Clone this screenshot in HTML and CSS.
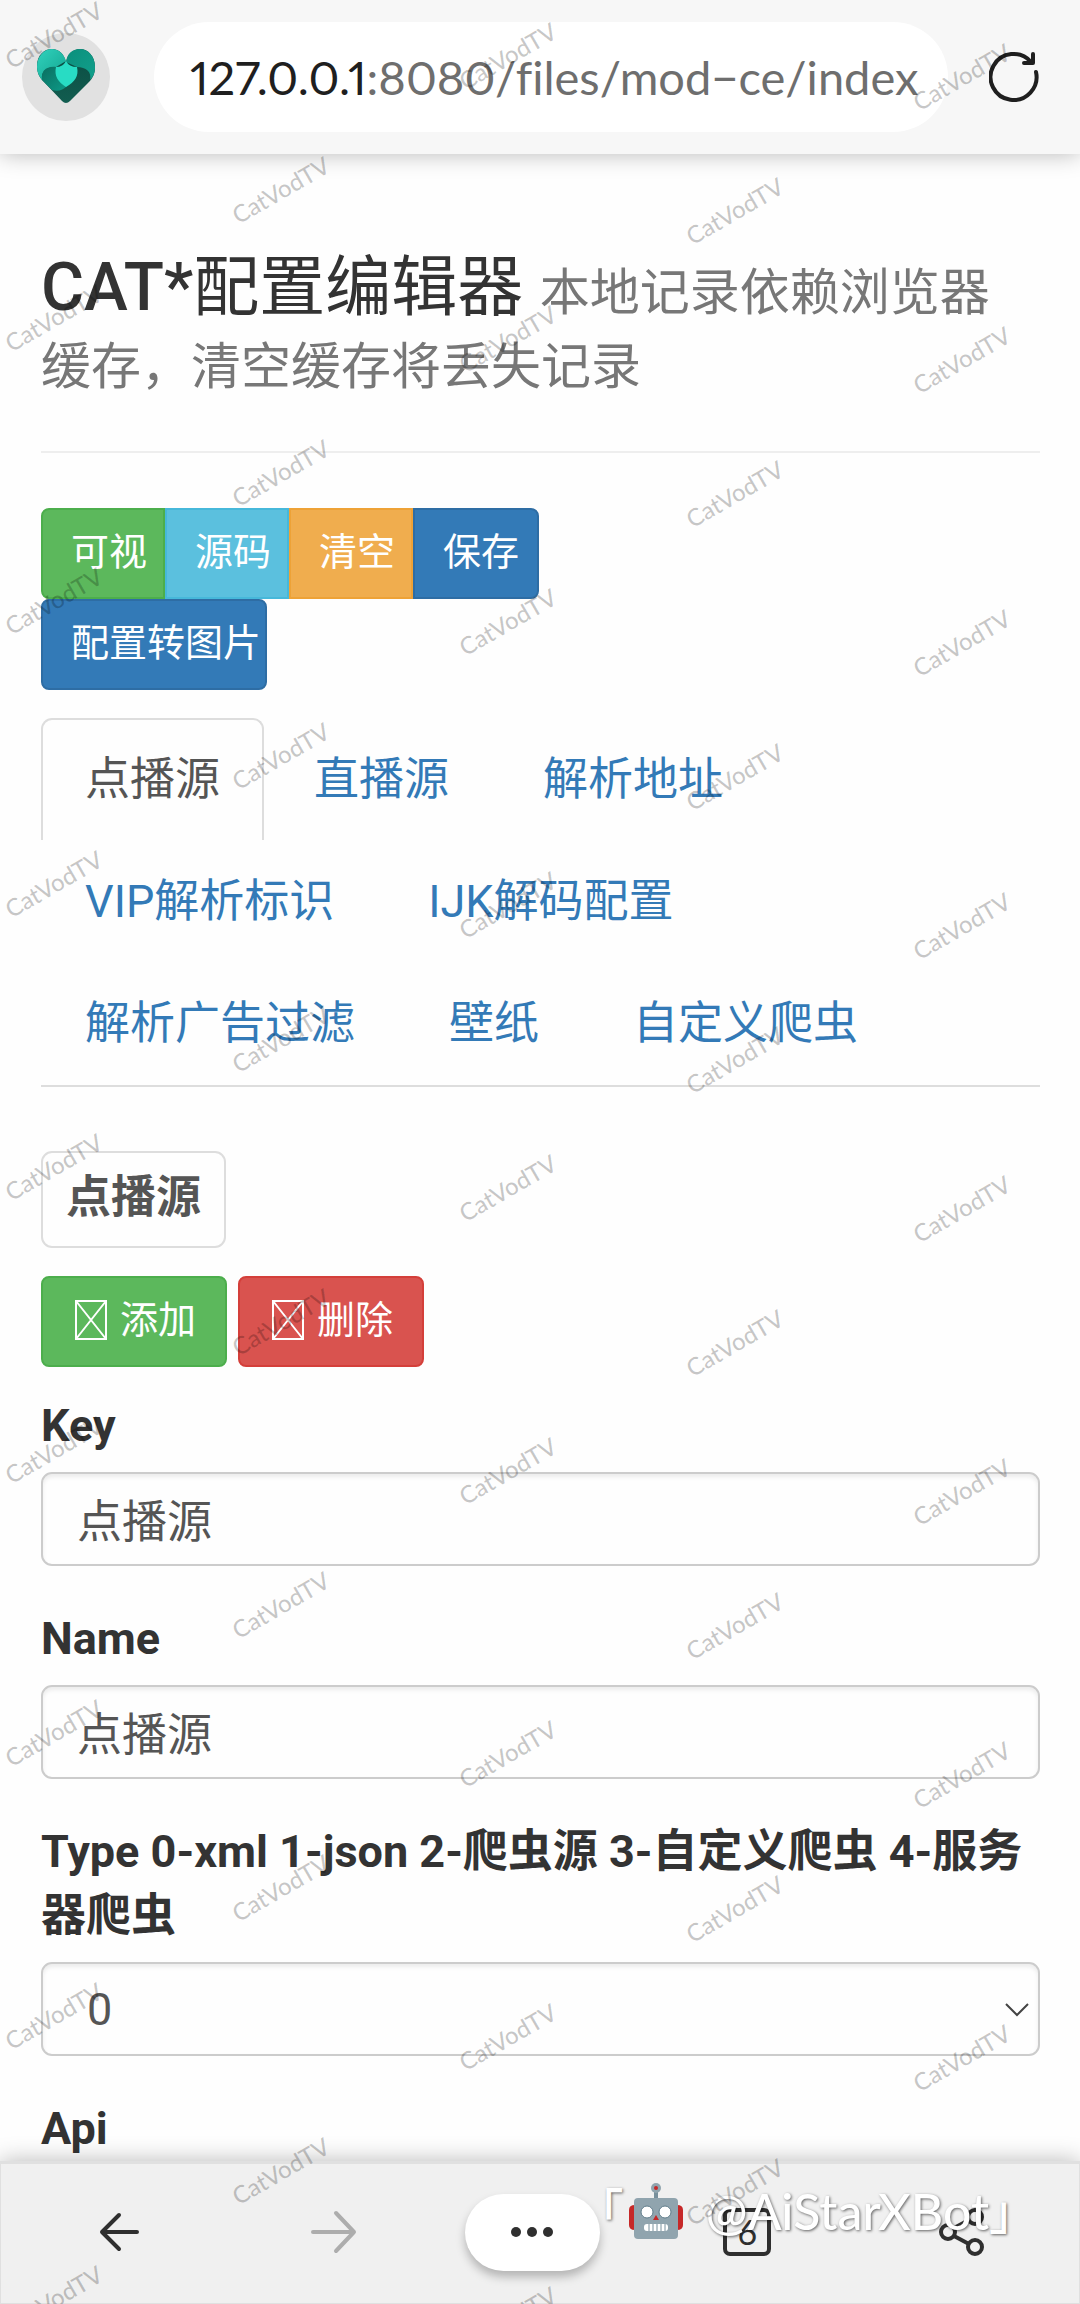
FILE: index.html
```html
<!DOCTYPE html>
<html lang="zh-CN">
<head>
<meta charset="utf-8">
<meta name="viewport" content="width=device-width, initial-scale=1">
<title>CAT*配置编辑器</title>
<link rel="stylesheet" href="styles.css">
</head>
<body>
<header class="topbar">
  <button class="avatar" type="button" aria-label="主页">
    <svg width="60" height="56" viewBox="0 0 60 56" aria-hidden="true">
      <defs>
        <linearGradient id="lobeLeft" x1="0" y1="0" x2="1" y2="1"><stop offset="0" stop-color="#31d2bd"/><stop offset="1" stop-color="#13a590"/></linearGradient>
        <linearGradient id="lobeRight" x1="0" y1="0" x2="1" y2="1"><stop offset="0" stop-color="#0b8f7c"/><stop offset="1" stop-color="#12a08c"/></linearGradient>
        <linearGradient id="foldLeft" x1="0" y1="0" x2="1" y2="1"><stop offset="0" stop-color="#0a6e60"/><stop offset="1" stop-color="#0d9b88"/></linearGradient>
        <linearGradient id="foldRight" x1="0" y1="0" x2="0" y2="1"><stop offset="0" stop-color="#0b4c42"/><stop offset="1" stop-color="#125d50"/></linearGradient>
      </defs>
      <path d="M30 13C28 5 23 0 16 0C8 0 1 6 1 17C1 25 4 29 8 33L26 52Q30 56 34 52L52 34C57 29 59 25 59 18C59 7 52 0 44 0C37 0 32 5 30 13Z" fill="url(#foldRight)"/>
      <path d="M30 12C28 5 23 0 16 0C8 0 1 7 1 18C1 23 3 27 6 31C5 22 10 18 20 18Z" fill="url(#lobeLeft)"/>
      <path d="M30 13C31 5 36 0 44 0C52 0 59 7 59 18C59 24 57 28 54 31C56 23 50 18 41 18Z" fill="url(#lobeRight)"/>
      <path d="M20 18C10 17 5 22 6 31L16 41C22 43 27 41 31 37Z" fill="url(#foldLeft)"/>
      <path d="M30 12Q27 18 20 18C18 27 22 33 30 38C39 33 43 27 41 18Q33 18 30 12Z" fill="#28dcc4"/>
    </svg>
  </button>
  <button class="address" type="button"><span class="host">127.0.0.1</span>:8080/files/mod−ce/index</button>
  <button class="reload" type="button" aria-label="刷新">
    <svg width="50" height="52" viewBox="0 0 50 52" fill="none" stroke="#1f1f1f" stroke-width="4" stroke-linecap="round" stroke-linejoin="round" aria-hidden="true">
      <path d="M47 21A23 23 0 1 1 42 11"/><path d="M44 3V12H35"/>
    </svg>
  </button>
</header>

<main class="page">
  <h1 class="title"><span class="heading">CAT*<span class="name">配置编辑器</span> <small class="subtitle">本地记录依赖浏览器缓存，清空缓存将丢失记录</small></span></h1>

  <div class="group">
    <button class="btn green" type="button">可视</button>
    <button class="btn cyan" type="button">源码</button>
    <button class="btn orange" type="button">清空</button>
    <button class="btn blue" type="button">保存</button>
  </div>
  <div class="group">
    <button class="btn blue wide" type="button">配置转图片</button>
  </div>

  <nav class="tabs">
    <a class="tab active" href="#vod">点播源</a>
    <a class="tab" href="#live">直播源</a>
    <a class="tab" href="#parse">解析地址</a>
    <a class="tab" href="#vip">VIP解析标识</a>
    <a class="tab" href="#ijk">IJK解码配置</a>
    <a class="tab" href="#ads">解析广告过滤</a>
    <a class="tab" href="#wall">壁纸</a>
    <a class="tab" href="#spider">自定义爬虫</a>
  </nav>

  <form class="form" id="vod">
    <button class="source" type="button">点播源</button>
    <div class="actions">
      <button class="btn action green" type="button"><svg class="glyph" viewBox="0 0 32 40" aria-hidden="true"><path d="M1 1H31V39H1ZL31 39M31 1L1 39"/></svg>添加</button>
      <button class="btn action red" type="button"><svg class="glyph" viewBox="0 0 32 40" aria-hidden="true"><path d="M1 1H31V39H1ZL31 39M31 1L1 39"/></svg>删除</button>
    </div>
    <label class="label" for="key">Key</label>
    <input class="field" id="key" type="text" value="点播源">
    <label class="label" for="name">Name</label>
    <input class="field" id="name" type="text" value="点播源">
    <label class="label" for="type">Type 0-xml 1-json 2-爬虫源 3-自定义爬虫 4-服务器爬虫</label>
    <div class="pick">
      <select class="field" id="type"><option>0</option><option>1</option><option>2</option><option>3</option><option>4</option></select>
      <svg class="chevron" width="24" height="14" viewBox="0 0 24 14" fill="none" stroke="#444" stroke-width="2" aria-hidden="true"><path d="M1 1L12 12L23 1"/></svg>
    </div>
    <span class="label">Api</span>
  </form>
</main>

<footer class="bottombar">
  <button class="tool" type="button" aria-label="后退">
    <svg width="40" height="40" viewBox="0 0 40 40" fill="none" stroke="#2f2f2f" stroke-width="4" stroke-linecap="round" stroke-linejoin="round"><path d="M38 20H3M20 3L3 20L20 37"/></svg>
  </button>
  <button class="tool" type="button" aria-label="前进">
    <svg width="46" height="44" viewBox="0 0 46 44" fill="none" stroke="#adadad" stroke-width="4" stroke-linecap="round" stroke-linejoin="round"><path d="M2 22H43M25 3L43 22L25 41"/></svg>
  </button>
  <button class="tool more" type="button" aria-label="更多">
    <svg width="46" height="12" viewBox="0 0 46 12" fill="#2f2f2f"><circle cx="7" cy="6" r="5"/><circle cx="23" cy="6" r="5"/><circle cx="39" cy="6" r="5"/></svg>
  </button>
  <button class="tool" type="button" aria-label="标签页"><span class="count">6</span></button>
  <button class="tool" type="button" aria-label="分享">
    <svg width="46" height="50" viewBox="0 0 46 50" fill="none" stroke="#2f2f2f" stroke-width="4"><path d="M16 21L31 13M16 29L31 37"/><circle cx="10" cy="25" r="7"/><circle cx="37" cy="10" r="7"/><circle cx="37" cy="40" r="7"/></svg>
  </button>
  <div class="credit">
    <span class="bracket">「</span>
    <svg class="robot" width="54" height="56" viewBox="0 0 54 56" aria-hidden="true">
      <path d="M6 22Q0 22 0 27V42Q0 47 6 47ZM48 22Q54 22 54 27V42Q54 47 48 47Z" fill="#c62828"/>
      <path d="M25 9H29V16H25Z" fill="#78909c"/>
      <circle cx="27" cy="5" r="5" fill="#90a4ae"/><circle cx="27" cy="5" r="2" fill="#c62828"/>
      <rect x="5" y="15" width="44" height="41" rx="4" fill="#90a4ae"/>
      <g fill="#fff" stroke="#607d8b"><circle cx="18" cy="29" r="6"/><circle cx="36" cy="29" r="6"/></g>
      <path d="M27 32L30 37H24Z" fill="#c62828"/>
      <rect x="15" y="41" width="24" height="7" rx="3" fill="#fff"/>
      <path d="M20 41V48M24 41V48M28 41V48M32 41V48M36 41V48" stroke="#78909c" stroke-width="1"/>
    </svg>
    <span class="handle">@AiStarXBot</span>
    <span class="bracket">」</span>
  </div>
</footer>

<div class="marks" aria-hidden="true">
  <div class="col a"><i>CatVodTV</i><i>CatVodTV</i><i>CatVodTV</i><i>CatVodTV</i><i>CatVodTV</i><i>CatVodTV</i><i>CatVodTV</i><i>CatVodTV</i><i>CatVodTV</i></div>
  <div class="col b"><i>CatVodTV</i><i>CatVodTV</i><i>CatVodTV</i><i>CatVodTV</i><i>CatVodTV</i><i>CatVodTV</i><i>CatVodTV</i><i>CatVodTV</i></div>
  <div class="col c"><i>CatVodTV</i><i>CatVodTV</i><i>CatVodTV</i><i>CatVodTV</i><i>CatVodTV</i><i>CatVodTV</i><i>CatVodTV</i><i>CatVodTV</i><i>CatVodTV</i></div>
  <div class="col d"><i>CatVodTV</i><i>CatVodTV</i><i>CatVodTV</i><i>CatVodTV</i><i>CatVodTV</i><i>CatVodTV</i><i>CatVodTV</i><i>CatVodTV</i></div>
  <div class="col e"><i>CatVodTV</i><i>CatVodTV</i><i>CatVodTV</i><i>CatVodTV</i><i>CatVodTV</i><i>CatVodTV</i><i>CatVodTV</i><i>CatVodTV</i></div>
</div>
</body>
</html>
```

FILE: styles.css
```css
* { box-sizing: border-box; }

body {
  margin: 0;
  position: relative;
  display: flex;
  flex-direction: column;
  height: 100vh;
  overflow: hidden;
  background: #fefefe;
  color: #333;
  font-family: Roboto, "Noto Sans CJK SC", sans-serif;
  font-size: 45px;
  line-height: 64px;
}

button, input, select { font: inherit; color: inherit; margin: 0; }
button { border: 0; padding: 0; background: none; cursor: pointer; }
svg { display: block; flex: none; }

/* Browser bar */
.topbar {
  position: relative;
  flex: none;
  display: flex;
  align-items: center;
  padding: 22px 41px 22px 22px;
  background: #f7f7f7;
  box-shadow: 0 0 22px rgba(0, 0, 0, .28);
}
.avatar {
  display: flex;
  align-items: center;
  justify-content: center;
  width: 88px;
  height: 88px;
  border-radius: 50%;
  background: #e1e1e1;
}
.address {
  flex: 1;
  min-width: 0;
  height: 110px;
  margin: 0 41px 0 44px;
  padding: 0 0 0 36px;
  border-radius: 55px;
  overflow: hidden;
  white-space: nowrap;
  text-align: left;
  background: #fff;
  color: #6e6e6e;
  font-family: Lato, sans-serif;
  font-size: 47px;
  font-variant-ligatures: none;
  font-variant-numeric: proportional-nums;
}
.host { color: #1f1f1f; }

/* Editor page */
.page {
  flex: 1;
  min-height: 0;
  overflow: hidden;
  padding: 97px 40px 0 41px;
}
.title {
  margin: 0 0 55px;
  padding-bottom: 52px;
  border-bottom: 2px solid #eee;
  font-size: 66px;
  font-weight: 500;
  line-height: 74px;
}
.heading { display: block; padding-right: 20px; }
.name { font-weight: 400; }
.subtitle { font-size: 50px; font-weight: 400; color: #777; line-height: 1; }

.group { display: flex; }
.btn {
  height: 91px;
  width: 124px;
  padding: 0 0 4px 28px;
  border: 2px solid;
  text-align: left;
  white-space: nowrap;
  font-size: 38px;
  color: #fff;
}
.group .btn:first-child { border-top-left-radius: 8px; border-bottom-left-radius: 8px; }
.group .btn:last-child { width: 126px; border-top-right-radius: 8px; border-bottom-right-radius: 8px; }
.group .btn.wide { width: 226px; }
.green { background: #5cb85c; border-color: #4cae4c; }
.cyan { background: #5bc0de; border-color: #46b8da; }
.orange { background: #f0ad4e; border-color: #eea236; }
.blue { background: #337ab7; border-color: #2e6da4; }
.red { background: #d9534f; border-color: #d43f3a; }

.tabs {
  display: flex;
  flex-wrap: wrap;
  column-gap: 6px;
  margin: 28px 0 64px;
  padding-bottom: 1px;
  border-bottom: 2px solid #ddd;
}
.tab {
  height: 122px;
  padding: 28px 42px 0;
  border: 2px solid transparent;
  border-bottom: 0;
  border-radius: 11px 11px 0 0;
  color: #337ab7;
  text-decoration: none;
}
.tab.active { border-color: #ddd; color: #555; }

.source {
  display: block;
  height: 97px;
  padding: 0 23px 4px;
  border: 2px solid #ddd;
  border-radius: 11px;
  font-weight: 700;
  color: #555;
}
.actions { display: flex; gap: 11px; margin: 28px 0 27px; }
.btn.action {
  display: flex;
  align-items: center;
  gap: 13px;
  width: 186px;
  padding-left: 32px;
  border-radius: 8px;
}
.glyph { width: 32px; height: 40px; fill: none; stroke: #fff; stroke-width: 2; }

.label { display: block; margin-bottom: 14px; font-weight: 700; }
.field {
  display: block;
  width: 100%;
  height: 94px;
  margin-bottom: 41px;
  padding: 0 34px 2px;
  border: 2px solid #ccc;
  border-radius: 11px;
  background: #fefefe;
  box-shadow: inset 0 3px 4px rgba(0, 0, 0, .075);
  color: #555;
  outline: 0;
}
select.field { appearance: none; padding: 2px 44px 0; }
.pick { position: relative; }
.chevron { position: absolute; right: 11px; top: 41px; pointer-events: none; }

/* Browser toolbar */
.bottombar {
  position: relative;
  flex: none;
  display: grid;
  grid-template-columns: 216fr 214fr 184fr 246fr 182fr;
  align-items: center;
  justify-items: center;
  height: 143px;
  padding: 0 27px 3px 10px;
  border: 1px solid #e0e0e0;
  border-top-width: 3px;
  background: #f0f0f0;
  box-shadow: 0 0 22px rgba(0, 0, 0, .28);
}
.tool { display: flex; align-items: center; justify-content: center; }
.more {
  width: 135px;
  height: 77px;
  border-radius: 39px;
  background: #fff;
  box-shadow: 0 6px 10px rgba(0, 0, 0, .25);
}
.count {
  width: 48px;
  height: 48px;
  border: 4px solid #2f2f2f;
  border-radius: 7px;
  font-family: Lato, sans-serif;
  font-size: 34px;
  line-height: 40px;
  color: #2f2f2f;
}
.credit {
  position: absolute;
  right: 42px;
  top: 15px;
  display: flex;
  align-items: center;
  color: #fff;
  font-family: Lato, "Noto Sans CJK SC", sans-serif;
  font-size: 50px;
  font-weight: 500;
  text-shadow: 1px 1px 3px rgba(0, 0, 0, .6);
}
.bracket { font-size: 48px; }
.robot { margin: 0 22px 0 6px; }

/* Repeated page watermark */
.marks {
  position: absolute;
  inset: 0;
  display: grid;
  grid-template-columns: repeat(5, 227px);
  overflow: hidden;
  pointer-events: none;
  color: rgba(0, 0, 0, .22);
  font-family: Lato, sans-serif;
  font-size: 24px;
  font-weight: 500;
  line-height: 28px;
}
.col { display: flex; flex-direction: column; align-items: flex-start; gap: 255px; }
.col i { width: 104px; font-style: normal; text-align: center; transform: rotate(-30deg); }
.a { padding-top: 22px; }
.b { padding-top: 177px; }
.c { padding-top: 43px; }
.d { padding-top: 198px; }
.e { padding-top: 64px; }
```
